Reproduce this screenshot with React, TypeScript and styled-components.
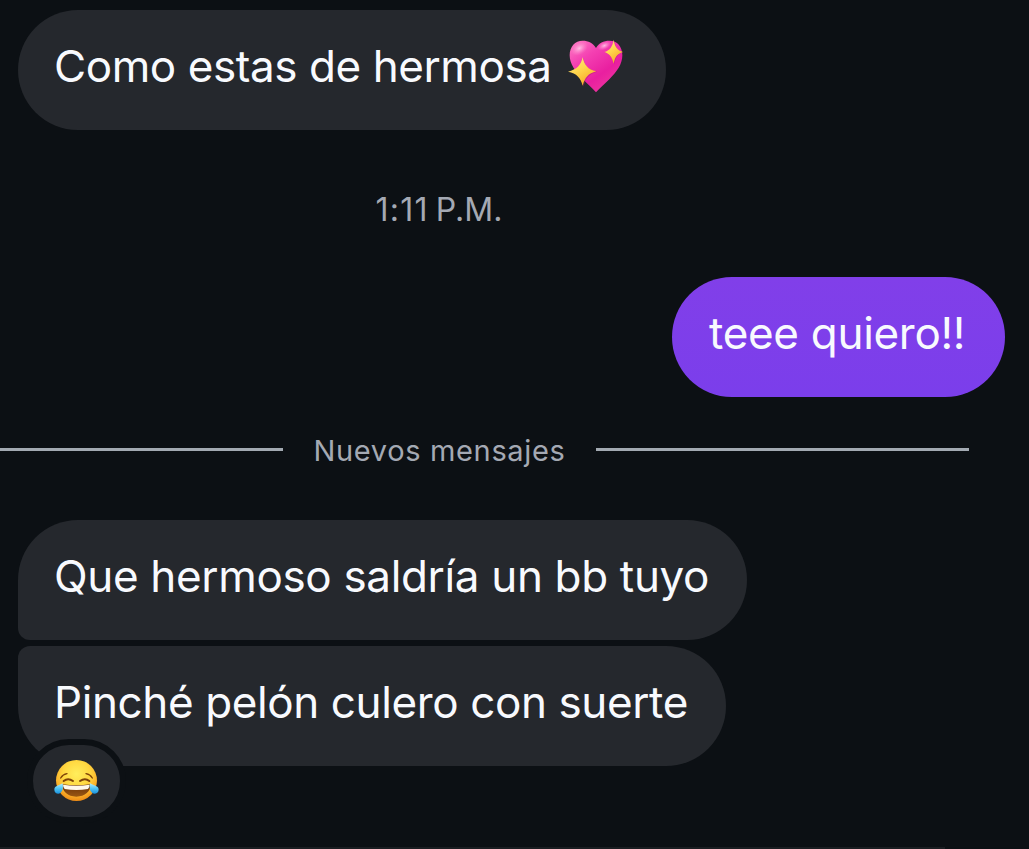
import styled, { createGlobalStyle } from 'styled-components';

export default function App() {
  return (
    <>
      <GlobalStyle />
      <Chat>
        <Bubble $width={648}>
          <Message $spacing={-0.42}>Como estas de hermosa</Message>
          <SparklingHeart />
        </Bubble>

        <Timestamp>
          <Hour>1:11</Hour>
          <span>P.M.</span>
        </Timestamp>

        <Bubble $width={333} $own>
          <Message $spacing={-0.3}>teee quiero!!</Message>
        </Bubble>

        <Divider>
          <Line />
          <DividerLabel>Nuevos mensajes</DividerLabel>
          <Line />
        </Divider>

        <Group>
          <Bubble $width={729} $corners="60px 60px 60px 12px">
            <Message $spacing={-0.34}>Que hermoso saldría un bb tuyo</Message>
          </Bubble>
          <Bubble $width={708} $corners="12px 60px 60px 60px">
            <Message $spacing={-0.39}>Pinché pelón culero con suerte</Message>
            <Reaction>
              <JoyFace />
            </Reaction>
          </Bubble>
        </Group>
        <BottomEdge />
      </Chat>
    </>
  );
}

function SparklingHeart() {
  return (
    <HeartIcon viewBox="54 57 168 162" aria-hidden="true">
      <defs>
        <linearGradient id="heart" x1="0" y1="0" x2="0.75" y2="1">
          <stop offset="0" stopColor="#ff7fc4" />
          <stop offset="0.35" stopColor="#f440b2" />
          <stop offset="0.7" stopColor="#e91fa0" />
          <stop offset="1" stopColor="#f0399f" />
        </linearGradient>
        <radialGradient id="shine">
          <stop offset="0" stopColor="#ffc4e6" stopOpacity="0.95" />
          <stop offset="1" stopColor="#ff8bcd" stopOpacity="0" />
        </radialGradient>
        <linearGradient id="spark" x1="0" y1="0" x2="0.6" y2="1">
          <stop offset="0" stopColor="#ffe98a" />
          <stop offset="0.5" stopColor="#ffd74e" />
          <stop offset="1" stopColor="#f7a928" />
        </linearGradient>
      </defs>
      <path
        fill="url(#heart)"
        d="M138 84C129 68 115 62 98 62C75 62 59 80 59 106C59 132 76 155 98 177C112 191 126 204 138 217C150 204 165 191 178 178C201 155 217 132 217 106C217 80 202 62 178 62C160 62 147 69 138 84Z"
      />
      <ellipse cx="88" cy="85" rx="28" ry="19" transform="rotate(-32 88 85)" fill="url(#shine)" />
      <ellipse cx="163" cy="77" rx="22" ry="12" transform="rotate(-25 163 77)" fill="url(#shine)" />
      <path
        fill="#a91869"
        opacity="0.4"
        d="M100 115C105 140 114 149 142 155C117 162 107 174 101 200C94 172 86 160 58 155C83 149 94 139 100 115Z"
      />
      <path
        fill="url(#spark)"
        d="M98 112C104 137 113 148 139 154C114 161 105 172 98 197C91 172 81 161 54 155C81 148 92 137 98 112Z"
      />
      <path
        fill="#a91869"
        opacity="0.4"
        d="M193 62C197 84 204 92 219 97C203 102 197 112 193 133C187 113 180 102 163 97C180 91 189 83 193 62Z"
      />
      <path
        fill="url(#spark)"
        d="M191 59C195 82 202 90 219 96C201 102 195 111 191 131C186 111 179 102 163 96C179 91 187 82 191 59Z"
      />
    </HeartIcon>
  );
}

function JoyFace() {
  return (
    <JoyIcon viewBox="160 117 141 129" aria-hidden="true">
      <defs>
        <radialGradient id="face" cx="0.5" cy="0.34" r="0.66">
          <stop offset="0" stopColor="#ffee5c" />
          <stop offset="0.5" stopColor="#ffd740" />
          <stop offset="0.78" stopColor="#fbb22a" />
          <stop offset="1" stopColor="#ec8a16" />
        </radialGradient>
        <linearGradient id="tear" x1="0" y1="0" x2="0" y2="1">
          <stop offset="0" stopColor="#b5edfc" />
          <stop offset="0.5" stopColor="#50c5f4" />
          <stop offset="1" stopColor="#1b91dc" />
        </linearGradient>
        <linearGradient id="mouth" x1="0" y1="0" x2="0" y2="1">
          <stop offset="0" stopColor="#683009" />
          <stop offset="1" stopColor="#9a5712" />
        </linearGradient>
      </defs>
      <circle cx="230.5" cy="181.5" r="61.5" fill="url(#face)" />
      <g fill="none" stroke="#7d4208" strokeLinecap="round">
        <path strokeWidth="4" d="M183 174Q190 163 202 161M278 174Q271 163 259 161" />
        <path strokeWidth="6" d="M192 183Q205 172 220 183M241 183Q256 172 269 183" />
      </g>
      <path
        fill="url(#mouth)"
        d="M188 193Q230 199 272 193C274 214 256 230 230 230C204 230 187 214 188 193Z"
      />
      <path fill="#fff8ec" d="M190 194Q230 200 270 194Q270 202 265 207Q230 213 195 207Q190 202 190 194Z" />
      <path fill="url(#tear)" d="M189 190C191 204 190 213 182 219C175 224 164 219 164 209C164 198 177 197 189 190Z" />
      <path fill="url(#tear)" d="M271 190C269 204 270 213 278 219C285 224 297 219 297 209C297 198 283 197 271 190Z" />
    </JoyIcon>
  );
}

const GlobalStyle = createGlobalStyle`
  * {
    box-sizing: border-box;
  }

  body {
    margin: 0;
    background: #0c1014;
    font-family: Inter, sans-serif;
    overflow: hidden;
  }
`;

const Chat = styled.main`
  display: flex;
  flex-direction: column;
  align-items: flex-start;
  height: 849px;
  padding-top: 10px;
`;

const Bubble = styled.div<{ $width: number; $own?: boolean; $corners?: string }>`
  position: relative;
  display: flex;
  flex-shrink: 0;
  align-items: flex-start;
  align-self: ${({ $own }) => ($own ? 'flex-end' : 'flex-start')};
  width: ${({ $width }) => $width}px;
  height: 120px;
  margin: 0 24px 0 18px;
  padding: 28px 36px 0 ${({ $own }) => ($own ? 37 : 36)}px;
  border-radius: ${({ $corners }) => $corners || '60px'};
  background: ${({ $own }) => ($own ? 'linear-gradient(#813fe9, #7b3eeb)' : '#25282d')};
  color: #f8fafe;
`;

const Message = styled.span<{ $spacing: number }>`
  font-size: 44px;
  line-height: 56px;
  letter-spacing: ${({ $spacing }) => $spacing}px;
  white-space: nowrap;
`;

const HeartIcon = styled.svg`
  width: 56px;
  height: 54px;
  flex-shrink: 0;
  margin-top: 1px;
  margin-left: auto;
  margin-right: 6px;
`;

const Timestamp = styled.time`
  display: flex;
  gap: 7px;
  width: 878px;
  height: 147px;
  padding-top: 60px;
  justify-content: center;
  color: #a4a9b3;
  font-size: 32px;
  line-height: 40px;
`;

const Hour = styled.span`
  letter-spacing: 1.2px;
`;

const Divider = styled.div`
  display: flex;
  align-items: center;
  width: 969px;
  height: 105px;
  margin-bottom: 18px;
`;

const Line = styled.span`
  height: 3px;
  background: #a3aab2;

  &:first-child {
    width: 283px;
  }

  &:last-child {
    width: 373px;
  }
`;

const DividerLabel = styled.span`
  width: 313px;
  padding-top: 2px;
  color: #a4a9b3;
  font-size: 29px;
  letter-spacing: 0.65px;
  line-height: 36px;
  text-align: center;
`;

const Group = styled.section`
  display: flex;
  flex-direction: column;
  gap: 6px;
`;

const Reaction = styled.span`
  position: absolute;
  top: 93px;
  left: 9px;
  display: flex;
  align-items: center;
  justify-content: center;
  width: 99px;
  height: 84px;
  padding-bottom: 1px;
  border: 6px solid #0c1014;
  border-radius: 42px;
  background: #25282d;
`;

const JoyIcon = styled.svg`
  width: 47px;
  height: 43px;
`;

const BottomEdge = styled.footer`
  width: 945px;
  height: 2px;
  margin-top: auto;
  background: #1b1e22;
`;
